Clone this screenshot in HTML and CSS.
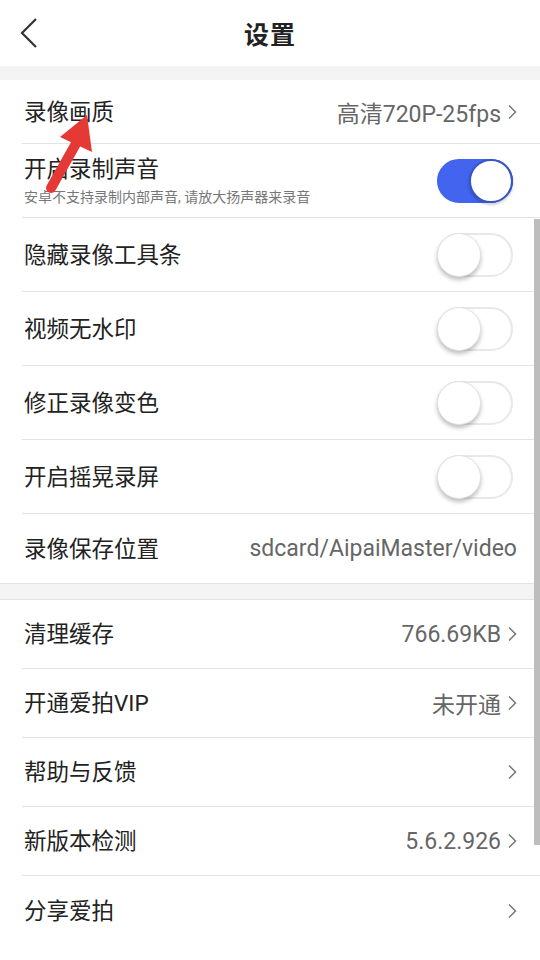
FILE: index.html
```html
<!DOCTYPE html>
<html lang="zh-CN">
<head>
    <meta charset="UTF-8">
    <meta name="viewport" content="width=device-width, initial-scale=1.0">
    <title>设置</title>
    <link rel="stylesheet" href="styles.css">
</head>
<body>
    <div class="screen">
        <header class="topbar">
            <svg class="back" width="20" height="32" viewBox="0 0 20 32">
                <polyline points="16,2 2,16 16,30" fill="none" stroke="#333" stroke-width="2.2" stroke-linejoin="miter"/>
            </svg>
            <h1>设置</h1>
        </header>

        <div class="band band-top"></div>

        <ul class="list">
            <li class="row short">
                <span class="label">录像画质</span>
                <span class="value">高清720P-25fps</span>
                <svg class="chev" width="10" height="16" viewBox="0 0 10 16"><polyline points="2,1.5 8.5,8 2,14.5" fill="none" stroke="#777" stroke-width="1.5"/></svg>
            </li>
            <li class="row toggle-row">
                <div class="label-block">
                    <span class="label">开启录制声音</span>
                    <span class="hint">安卓不支持录制内部声音, 请放大扬声器来录音</span>
                </div>
                <span class="switch on"><span class="knob"></span></span>
            </li>
            <li class="row toggle-row">
                <span class="label">隐藏录像工具条</span>
                <span class="switch"><span class="knob"></span></span>
            </li>
            <li class="row toggle-row">
                <span class="label">视频无水印</span>
                <span class="switch"><span class="knob"></span></span>
            </li>
            <li class="row toggle-row">
                <span class="label">修正录像变色</span>
                <span class="switch"><span class="knob"></span></span>
            </li>
            <li class="row toggle-row">
                <span class="label">开启摇晃录屏</span>
                <span class="switch"><span class="knob"></span></span>
            </li>
            <li class="row mid last">
                <span class="label">录像保存位置</span>
                <span class="value path">sdcard/AipaiMaster/video</span>
            </li>
        </ul>

        <div class="band"></div>

        <ul class="list">
            <li class="row mid">
                <span class="label">清理缓存</span>
                <span class="value">766.69KB</span>
                <svg class="chev" width="10" height="16" viewBox="0 0 10 16"><polyline points="2,1.5 8.5,8 2,14.5" fill="none" stroke="#777" stroke-width="1.5"/></svg>
            </li>
            <li class="row mid">
                <span class="label">开通爱拍VIP</span>
                <span class="value">未开通</span>
                <svg class="chev" width="10" height="16" viewBox="0 0 10 16"><polyline points="2,1.5 8.5,8 2,14.5" fill="none" stroke="#777" stroke-width="1.5"/></svg>
            </li>
            <li class="row mid">
                <span class="label">帮助与反馈</span>
                <svg class="chev" width="10" height="16" viewBox="0 0 10 16"><polyline points="2,1.5 8.5,8 2,14.5" fill="none" stroke="#777" stroke-width="1.5"/></svg>
            </li>
            <li class="row mid">
                <span class="label">新版本检测</span>
                <span class="value">5.6.2.926</span>
                <svg class="chev" width="10" height="16" viewBox="0 0 10 16"><polyline points="2,1.5 8.5,8 2,14.5" fill="none" stroke="#777" stroke-width="1.5"/></svg>
            </li>
            <li class="row mid plain">
                <span class="label">分享爱拍</span>
                <svg class="chev" width="10" height="16" viewBox="0 0 10 16"><polyline points="2,1.5 8.5,8 2,14.5" fill="none" stroke="#777" stroke-width="1.5"/></svg>
            </li>
            <li class="row toggle-row plain">
                <span class="switch on"><span class="knob"></span></span>
            </li>
        </ul>

        <!-- scroll indicator -->
        <div class="scrollbar"></div>

        <!-- red annotation arrow -->
        <svg class="arrow" width="60" height="100" viewBox="0 0 60 100">
            <line x1="11" y1="76" x2="38" y2="28" stroke="#e53935" stroke-width="10" stroke-linecap="round"/>
            <polygon points="47,3 20,25 52,40" fill="#e53935"/>
        </svg>
    </div>
</body>
</html>
```

FILE: styles.css
```css
body {
    margin: 0;
    background-color: #fff;
    font-family: Roboto, "Noto Sans CJK SC", sans-serif;
    color: #222;
}

.screen {
    position: relative;
    width: 540px;
    height: 960px;
    overflow: hidden;
    background-color: #fff;
}

.topbar {
    height: 66px;
    display: flex;
    align-items: center;
    justify-content: center;
    position: relative;
}

.topbar h1 {
    margin: 0;
    font-size: 25px;
    font-weight: bold;
    color: #222;
    letter-spacing: 1px;
}

.back {
    position: absolute;
    left: 20px;
    top: 17px;
}

.band {
    height: 15px;
    background-color: #f4f4f4;
    border-top: 1px solid #e3e3e3;
    border-bottom: 1px solid #e3e3e3;
}

.band-top {
    height: 14px;
    border: none;
}

.list {
    list-style: none;
    margin: 0;
    padding: 0;
}

.row {
    display: flex;
    align-items: center;
    margin-left: 22px;
    padding-left: 2px;
    padding-right: 23px;
    border-bottom: 1px solid #e3e3e3;
    box-sizing: border-box;
}

.row.short {
    height: 64px;
}

.row.mid {
    height: 69px;
}

.toggle-row {
    height: 74px;
    padding-right: 27px;
}

.row.last,
.row.plain {
    border-bottom: none;
}

.label {
    flex: 1;
    font-size: 22.5px;
    line-height: 28px;
    color: #222;
}

.label-block {
    flex: 1;
    display: flex;
    flex-direction: column;
}

.hint {
    font-size: 14px;
    line-height: 18px;
    color: #777;
    margin-top: 5px;
}

.value {
    font-size: 23px;
    color: #666;
    margin-right: 6px;
}

.value.path {
    margin-right: 0;
}

.chev {
    display: block;
}

.switch {
    position: relative;
    width: 76px;
    height: 44px;
    border-radius: 22px;
    box-sizing: border-box;
    background-color: #fff;
    border: 2px solid #e8e8e8;
}

.switch .knob {
    position: absolute;
    left: -2px;
    top: -2px;
    width: 44px;
    height: 44px;
    border-radius: 50%;
    background-color: #fff;
    box-sizing: border-box;
    border: 1px solid #e2e2e2;
    box-shadow: 0 3px 4px rgba(0, 0, 0, 0.25);
}

.switch.on {
    background-color: #4264ee;
    border-color: #4264ee;
}

.switch.on .knob {
    left: auto;
    right: -2px;
    border: 2px solid #3a55c8;
    box-shadow: 0 2px 3px rgba(0, 0, 0, 0.2);
}

.scrollbar {
    position: absolute;
    right: 0;
    top: 219px;
    width: 6px;
    height: 626px;
    background-color: #bdbdbd;
}

.arrow {
    position: absolute;
    left: 40px;
    top: 112px;
}
```
